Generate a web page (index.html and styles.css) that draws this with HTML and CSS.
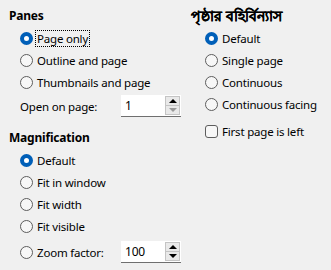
FILE: index.html
```html
<!DOCTYPE html>
<html>
<head>
<meta charset="utf-8">
<link rel="stylesheet" href="styles.css">
</head>
<body>
<div class="dialog">
  <div class="col left">
    <div class="heading">Panes</div>
    <div class="group">
      <label class="row"><span class="radio on"></span><span class="focus">Page only</span></label>
      <label class="row"><span class="radio"></span><span>Outline and page</span></label>
      <label class="row"><span class="radio"></span><span>Thumbnails and page</span></label>
    </div>
    <div class="field-row plain">
      <span class="field-label">Open on page:</span>
      <div class="spin">
        <span class="value">1</span>
        <div class="spin-btns">
          <span class="btn up"><span class="tri-up"></span></span>
          <span class="btn down disabled"><span class="tri-down"></span></span>
        </div>
      </div>
    </div>
    <div class="heading mag">Magnification</div>
    <div class="group">
      <label class="row"><span class="radio on"></span><span>Default</span></label>
      <label class="row"><span class="radio"></span><span>Fit in window</span></label>
      <label class="row"><span class="radio"></span><span>Fit width</span></label>
      <label class="row"><span class="radio"></span><span>Fit visible</span></label>
      <div class="field-row zoom">
        <span class="radio"></span><span class="field-label short">Zoom factor:</span>
        <div class="spin">
          <span class="value">100</span>
          <div class="spin-btns">
            <span class="btn up"><span class="tri-up"></span></span>
            <span class="btn down"><span class="tri-down"></span></span>
          </div>
        </div>
      </div>
    </div>
  </div>
  <div class="col right">
    <div class="heading bn">পৃষ্ঠার বহির্বিন্যাস</div>
    <div class="group">
      <label class="row"><span class="radio on"></span><span>Default</span></label>
      <label class="row"><span class="radio"></span><span>Single page</span></label>
      <label class="row"><span class="radio"></span><span>Continuous</span></label>
      <label class="row"><span class="radio"></span><span>Continuous facing</span></label>
      <label class="row check-row"><span class="check"></span><span>First page is left</span></label>
    </div>
  </div>
</div>
</body>
</html>
```
FILE: styles.css
```css
html, body {
  margin: 0;
  padding: 0;
  background: #f0f0f0;
}
body {
  font-family: "Noto Sans", "Open Sans", sans-serif;
  font-size: 11.5px;
  letter-spacing: -0.2px;
  color: #000;
  width: 331px;
  height: 270px;
  overflow: hidden;
}
.dialog {
  display: flex;
  padding-top: 5px;
}
.col {
  display: flex;
  flex-direction: column;
}
.left {
  width: 185px;
  padding-left: 9px;
}
.right {
  padding-left: 0;
}
.heading {
  height: 22px;
  line-height: 22px;
  font-weight: bold;
  font-size: 12px;
}
.heading.bn {
  font-size: 14px;
  letter-spacing: 0.1px;
  margin-left: -3px;
  -webkit-text-stroke: 0.2px #000;
}
.heading.mag {
  margin-top: 9px;
}
.group {
  display: flex;
  flex-direction: column;
  padding-left: 11px;
}
.row {
  display: flex;
  align-items: center;
  height: 22px;
  gap: 4px;
}
.radio {
  box-sizing: border-box;
  width: 13px;
  height: 13px;
  border-radius: 50%;
  border: 1px solid #5d5d5d;
  background: #f7f7f7;
  flex: none;
}
.radio.on {
  border: 4px solid #005fb8;
  background: #fff;
}
.focus {
  outline: 1px dotted #000;
  outline-offset: 0;
  padding: 0 1px;
  margin-left: -1px;
  line-height: 15px;
}
.check {
  box-sizing: border-box;
  width: 13px;
  height: 13px;
  border-radius: 3px;
  border: 1px solid #5d5d5d;
  background: #f7f7f7;
  flex: none;
}
.check-row {
  margin-top: 5px;
}
.field-row {
  display: flex;
  align-items: center;
  height: 24px;
}
.field-row.plain {
  padding-left: 11px;
  margin-top: 1px;
}
.field-row.zoom {
  margin-top: 3px;
  gap: 4px;
}
.field-label {
  width: 101px;
}
.field-label.short {
  width: 80px;
}
.spin {
  box-sizing: border-box;
  width: 60px;
  height: 22px;
  background: #fff;
  border-bottom: 1px solid #6f6f6f;
  display: flex;
  align-items: center;
  justify-content: space-between;
  padding-left: 4px;
}
.spin .value {
  font-size: 12px;
}
.spin-btns {
  display: flex;
  flex-direction: column;
  gap: 0;
  margin-right: 1px;
}
.btn {
  box-sizing: border-box;
  width: 15px;
  height: 10px;
  background: #e9e9e9;
  border: 1px solid #c4c4c4;
  display: flex;
  align-items: center;
  justify-content: center;
}
.btn.down {
  margin-top: -1px;
}
.tri-up {
  width: 0;
  height: 0;
  border-left: 4px solid transparent;
  border-right: 4px solid transparent;
  border-bottom: 4px solid #000;
}
.tri-down {
  width: 0;
  height: 0;
  border-left: 4px solid transparent;
  border-right: 4px solid transparent;
  border-top: 4px solid #000;
}
.btn.disabled .tri-down {
  border-top-color: #9a9a9a;
}
```
